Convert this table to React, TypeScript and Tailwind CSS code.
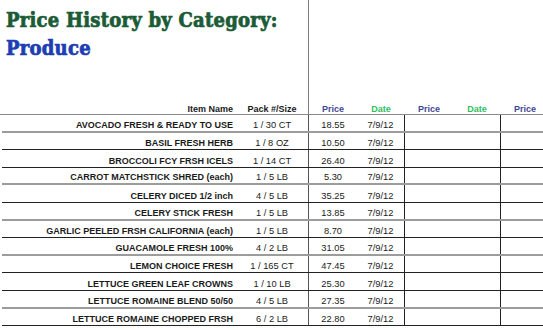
import React from 'react';

type Row = { name: string; pack: string; price: string; date: string; line: 'gray' | 'dark' };

const rows: Row[] = [
  { name: 'AVOCADO FRESH & READY TO USE', pack: '1 / 30 CT', price: '18.55', date: '7/9/12', line: 'gray' },
  { name: 'BASIL FRESH HERB', pack: '1 / 8 OZ', price: '10.50', date: '7/9/12', line: 'dark' },
  { name: 'BROCCOLI FCY FRSH ICELS', pack: '1 / 14 CT', price: '26.40', date: '7/9/12', line: 'dark' },
  { name: 'CARROT MATCHSTICK SHRED (each)', pack: '1 / 5 LB', price: '5.30', date: '7/9/12', line: 'gray' },
  { name: 'CELERY DICED 1/2 inch', pack: '4 / 5 LB', price: '35.25', date: '7/9/12', line: 'dark' },
  { name: 'CELERY STICK FRESH', pack: '1 / 5 LB', price: '13.85', date: '7/9/12', line: 'gray' },
  { name: 'GARLIC PEELED FRSH CALIFORNIA (each)', pack: '1 / 5 LB', price: '8.70', date: '7/9/12', line: 'dark' },
  { name: 'GUACAMOLE FRESH 100%', pack: '4 / 2 LB', price: '31.05', date: '7/9/12', line: 'gray' },
  { name: 'LEMON CHOICE FRESH', pack: '1 / 165 CT', price: '47.45', date: '7/9/12', line: 'dark' },
  { name: 'LETTUCE GREEN LEAF CROWNS', pack: '1 / 10 LB', price: '25.30', date: '7/9/12', line: 'dark' },
  { name: 'LETTUCE ROMAINE BLEND 50/50', pack: '4 / 5 LB', price: '27.35', date: '7/9/12', line: 'gray' },
  { name: 'LETTUCE ROMAINE CHOPPED FRSH', pack: '6 / 2 LB', price: '22.80', date: '7/9/12', line: 'dark' },
];

export default function App() {
  return (
    <div className="w-[543px] h-[330px] overflow-hidden bg-white text-[#1a1a1a] font-['Liberation_Sans',Arial,sans-serif]">
      {/* Title */}
      <div className="flex h-[101px]">
        <div className="w-[309px] shrink-0 border-r border-[#7d7d7d] pl-[6px] pt-[6px] font-['DejaVu_Serif_Condensed','DejaVu_Serif',serif] font-bold text-[20px] leading-[28px] tracking-[0.25px] [-webkit-text-stroke:0.7px_currentColor]">
          <div className="text-[#1b5b36]">Price History by Category:</div>
          <div className="text-[#1d3db3]">Produce</div>
        </div>
      </div>

      {/* Header row */}
      <div className="grid grid-cols-[236px_73px_48px_48px_48px_48px_48px] h-[14px] border-b border-[#8a8a8a] text-[9px] font-bold leading-[16px]">
        <div className="text-right pr-[3px]">Item Name</div>
        <div className="text-center border-r border-[#7d7d7d]">Pack #/Size</div>
        <div className="text-center text-[#3b4994]">Price</div>
        <div className="text-center text-[#2fbf62]">Date</div>
        <div className="text-center text-[#3b4994]">Price</div>
        <div className="text-center text-[#2fbf62]">Date</div>
        <div className="text-center text-[#3b4994]">Price</div>
      </div>

      {/* Rows */}
      {rows.map((r) => (
        <div
          key={r.name}
          className={`ml-[2px] grid grid-cols-[234px_73px_48px_48px_48px_48px_48px] h-[17.6px] text-[9.3px] leading-[10px] ${
            r.line === 'gray' ? 'border-b-2 border-[#9c9c9c]' : 'border-b border-[#222]'
          }`}
        >
          <div className="flex items-end justify-end pr-[3px] pb-[1px] text-[9px] font-bold whitespace-nowrap">{r.name}</div>
          <div className="flex items-end justify-center pb-[1px] border-r border-[#555]">{r.pack}</div>
          <div className="flex items-end justify-center pb-[1px]">{r.price}</div>
          <div className="flex items-end justify-center pb-[1px] border-r border-[#222]">{r.date}</div>
          <div />
          <div className="border-r border-[#222]" />
          <div />
        </div>
      ))}
    </div>
  );
}
